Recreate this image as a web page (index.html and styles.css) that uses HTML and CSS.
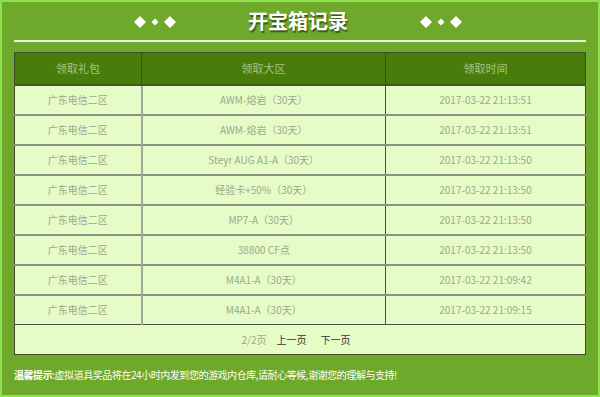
FILE: index.html
```html
<!DOCTYPE html>
<html lang="zh">
<head>
<meta charset="utf-8">
<link rel="stylesheet" href="styles.css">
</head>
<body>
<div class="page">
  <div class="title-bar">
    <svg class="dots" width="42" height="14" viewBox="0 0 42 14"><path d="M6 1 L12 7 L6 13 L0 7Z M21 3.5 L24.5 7 L21 10.5 L17.5 7Z M36 1 L42 7 L36 13 L30 7Z" fill="#fff"/></svg>
    <h1 class="title">开宝箱记录</h1>
    <svg class="dots" width="42" height="14" viewBox="0 0 42 14"><path d="M6 1 L12 7 L6 13 L0 7Z M21 3.5 L24.5 7 L21 10.5 L17.5 7Z M36 1 L42 7 L36 13 L30 7Z" fill="#fff"/></svg>
  </div>
  <div class="rule"></div>
  <table class="records">
    <thead>
      <tr><th class="c1">领取礼包</th><th class="c2">领取大区</th><th class="c3">领取时间</th></tr>
    </thead>
    <tbody>
      <tr><td>广东电信二区</td><td>AWM-熔岩（30天）</td><td>2017-03-22 21:13:51</td></tr>
      <tr><td>广东电信二区</td><td>AWM-熔岩（30天）</td><td>2017-03-22 21:13:51</td></tr>
      <tr><td>广东电信二区</td><td>Steyr AUG A1-A（30天）</td><td>2017-03-22 21:13:50</td></tr>
      <tr><td>广东电信二区</td><td>经验卡+50%（30天）</td><td>2017-03-22 21:13:50</td></tr>
      <tr><td>广东电信二区</td><td>MP7-A（30天）</td><td>2017-03-22 21:13:50</td></tr>
      <tr><td>广东电信二区</td><td>38800 CF点</td><td>2017-03-22 21:13:50</td></tr>
      <tr><td>广东电信二区</td><td>M4A1-A（30天）</td><td>2017-03-22 21:09:42</td></tr>
      <tr><td>广东电信二区</td><td>M4A1-A（30天）</td><td>2017-03-22 21:09:15</td></tr>
      <tr class="pager-row"><td colspan="3"><span class="pg-count">2/2页</span><a class="pg-link">上一页</a><a class="pg-link next">下一页</a></td></tr>
    </tbody>
  </table>
  <p class="tip"><b>温馨提示</b>:虚拟道具奖品将在24小时内发到您的游戏内仓库,请耐心等候,谢谢您的理解与支持!</p>
</div>
</body>
</html>
```
FILE: styles.css
```css
* { box-sizing: border-box; }
html, body { margin: 0; padding: 0; }
body {
  width: 600px;
  height: 397px;
  overflow: hidden;
  font-family: "Noto Sans CJK SC", "Noto Sans", sans-serif;
}
.page {
  width: 600px;
  height: 397px;
  background: #6ea92b;
  border: 2px solid #8ee34c;
  padding: 0 12px;
}
.title-bar {
  height: 38px;
  display: flex;
  align-items: center;
  justify-content: center;
  gap: 72px;
  padding-right: 4px;
}
.dots { display: block; margin-top: 1px; }
.title {
  margin: 0;
  font-size: 20px;
  font-weight: 700;
  color: #fff;
  line-height: 24px;
  text-shadow: 1px 2px 1px rgba(40, 60, 10, 0.75);
}
.rule {
  height: 2px;
  background: #e9f7d6;
  margin-bottom: 10px;
}
.records {
  width: 572px;
  border-collapse: collapse;
  border: 1px solid #3e4a30;
  table-layout: fixed;
}
.records th {
  height: 32px;
  background: #497d0b;
  color: #a3c487;
  font-size: 11px;
  font-weight: 400;
  border: 1px solid #3e4a30;
  border-bottom: 2px solid #3e5a1a;
  padding: 0;
}
.c1 { width: 127px; }
.c2 { width: 244px; }
.records td {
  height: 30px;
  background: #e5fcc6;
  color: #9ea78e;
  font-size: 10px;
  text-align: center;
  padding: 0;
  border-top: 2px solid #8c9282;
  border-left: 2px solid #a3a896;
}
.records td:first-child { border-left: none; }
.records td:last-child { border-left: 1px solid #4b5040; }
.records tbody tr:first-child td { border-top: none; }
.pager-row td {
  height: 30px;
  border-top: 1px solid #4b5040 !important;
  border-left: none !important;
  padding-right: 8px;
}
.pg-count { color: #9ea78e; margin-right: 10px; }
.pg-link { color: #333; }
.pg-link.next { margin-left: 14px; }
.tip {
  margin: 13px 0 0;
  color: #fff;
  font-size: 10px;
  line-height: 14px;
  letter-spacing: -0.45px;
}
.tip b { font-weight: 700; }
```
